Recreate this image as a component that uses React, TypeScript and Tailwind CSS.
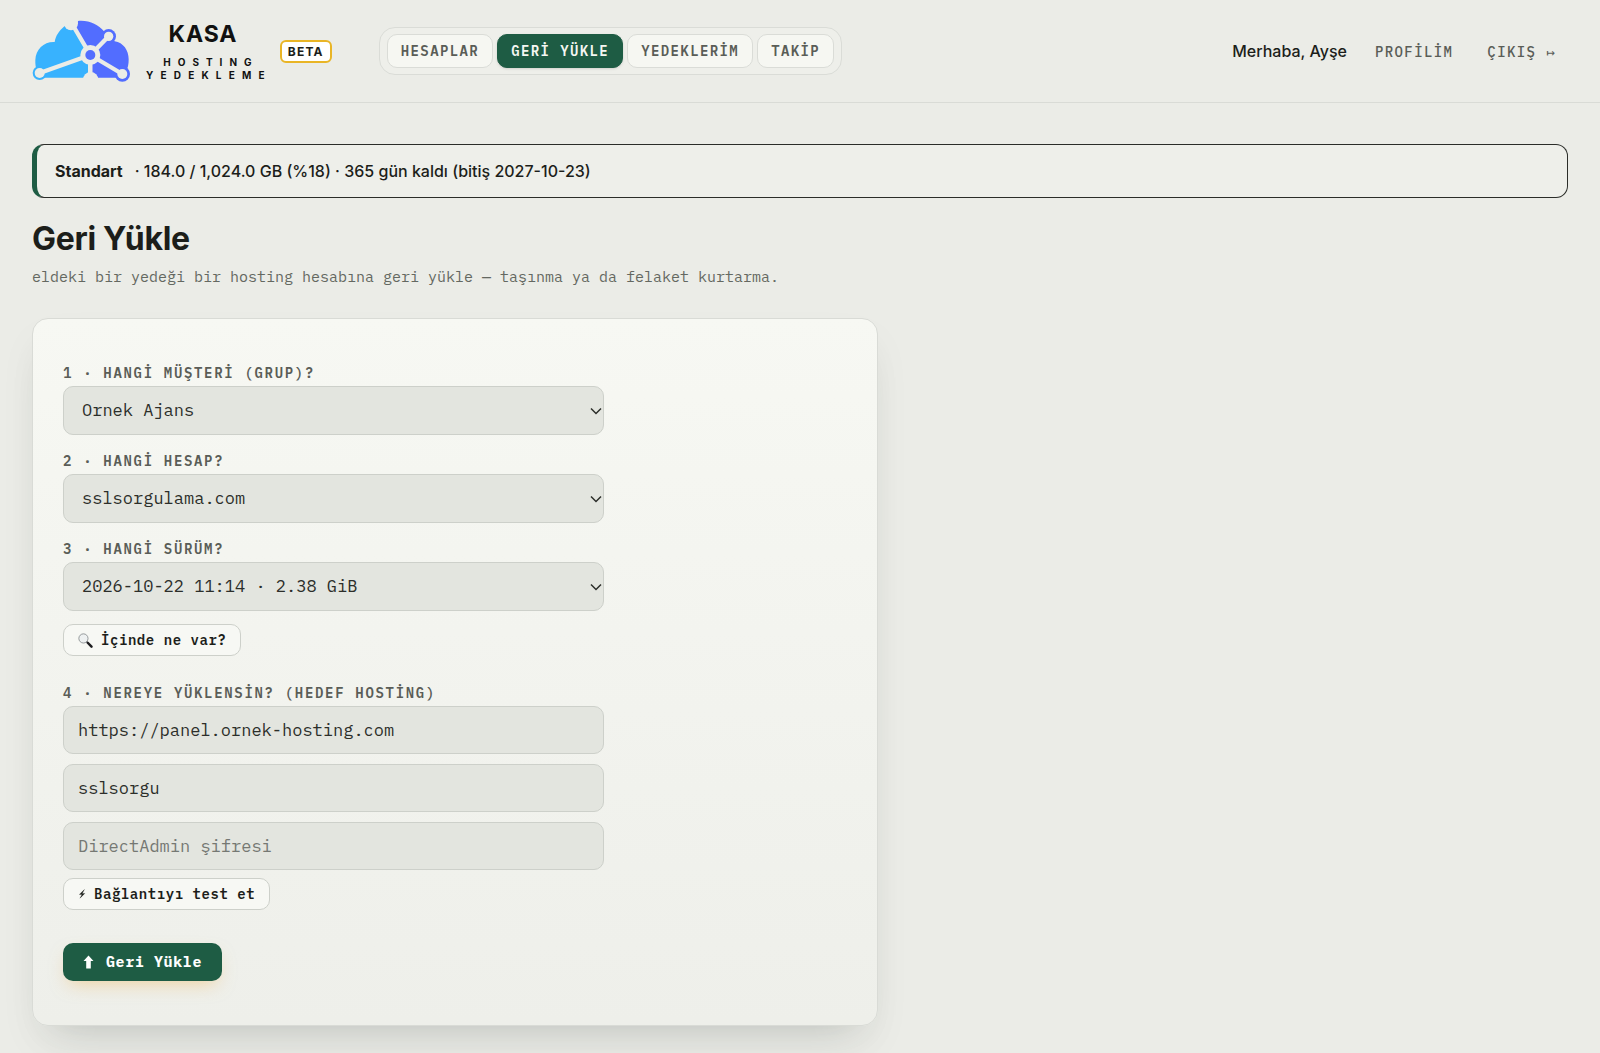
import type { ReactNode } from "react";

const MONO = "font-['IBM_Plex_Mono','Liberation_Mono',monospace]";

function Logo() {
  return (
    <svg viewBox="97 58 292 186" className="h-[62px] w-[98px] shrink-0" aria-hidden="true">
      <path
        d="M130 231C112 222 105 203 106 178C107 145 133 122 164 124C167 106 176 91 194 76L222 80L240 112L264 163V231Z"
        fill="#38b2fe"
      />
      <path
        d="M234 61C268 58 294 72 312 92L344 122C370 126 386 149 386 176C386 190 384 202 378 212L352 231H271V163L226 84Z"
        fill="#526dff"
      />
      <circle cx="213" cy="68" r="21" fill="#ebece7" />
      <circle cx="272" cy="237" r="23" fill="#ebece7" />
      <path d="M220 76L271 163V226" fill="none" stroke="#ebece7" strokeWidth="13" />
      <circle cx="119" cy="217" r="21" fill="#38b2fe" />
      <circle cx="367" cy="220" r="23" fill="#526dff" />
      <circle cx="326" cy="107" r="22" fill="#526dff" />
      <path d="M119 217L271 163M271 163L367 220M271 163L326 107" stroke="#ebece7" strokeWidth="13" />
      <circle cx="119" cy="217" r="15" fill="#ebece7" />
      <circle cx="367" cy="220" r="15" fill="#ebece7" />
      <circle cx="326" cy="107" r="14" fill="#ebece7" />
      <circle cx="271" cy="163" r="30" fill="#ebece7" />
      <circle cx="271" cy="163" r="15" fill="#526dff" />
    </svg>
  );
}

function SearchIcon() {
  return (
    <svg viewBox="0 0 16 16" className="h-[15px] w-[15px]" aria-hidden="true">
      <circle cx="5.8" cy="5.8" r="4.9" fill="#eef1f1" stroke="#85898c" strokeWidth="0.9" />
      <path d="M9.2 9.2L11 11" stroke="#70767a" strokeWidth="1.2" />
      <path d="M10.4 10.4L14.4 14.6" stroke="#1d1d1f" strokeWidth="2.6" strokeLinecap="round" />
    </svg>
  );
}

function BoltIcon() {
  return (
    <svg viewBox="0 0 8 12" className="h-3 w-2" aria-hidden="true">
      <path d="M6.4 1.6L1.4 6.4H4L2 10.2L6.8 5.4H4.2Z" fill="#1c1e1a" stroke="#1c1e1a" strokeWidth="0.3" strokeLinejoin="round" />
    </svg>
  );
}

function UpIcon() {
  return (
    <svg viewBox="0 0 11 14" className="h-3.5 w-[11px]" aria-hidden="true">
      <path d="M5.5 0.5L10.5 6H7.8V13.5H3.2V6H0.5Z" fill="#fff" />
    </svg>
  );
}

const tabs = ["HESAPLAR", "GERİ YÜKLE", "YEDEKLERİM", "TAKİP"];

function Header() {
  return (
    <header className="flex items-center border-b border-[#d9dbd6] px-8 pt-5 pb-5">
      <a href="#" className="flex items-center">
        <Logo />
        <span className="ml-4 flex flex-col items-center text-[#111]">
          <span className="mr-3 text-[23px] leading-7 font-bold tracking-[0.04em]">KASA</span>
          <span className="mt-2 pl-1 text-[10px] leading-[13px] font-bold tracking-[0.7em]">HOSTING</span>
          <span className="text-[10px] leading-[13px] font-bold tracking-[0.72em]">YEDEKLEME</span>
        </span>
      </a>
      <span className="ml-2 rounded-md border-2 border-[#e9b526] bg-white px-[6px] text-[12px] leading-[19px] font-bold tracking-[0.1em] text-[#1c1e1a]">
        BETA
      </span>
      <nav className="ml-[47px] flex gap-1 rounded-2xl border border-[#dadcd7] bg-[#eeefea] px-[7px] py-[6px]">
        {tabs.map((t) => (
          <a
            key={t}
            href="#"
            className={`${MONO} rounded-[10px] border px-[13px] py-[6px] text-[14px] leading-5 font-semibold tracking-[0.1em] whitespace-nowrap ${
              t === "GERİ YÜKLE"
                ? "border-[#1e5c44] bg-[#1e5c44] text-[#f5f7f2] shadow-sm"
                : "border-[#dadcd7] bg-[#f6f7f2] text-[#5a5d57]"
            }`}
          >
            {t}
          </a>
        ))}
      </nav>
      <div className="ml-auto flex items-center gap-[10px]">
        <span className="mr-[6px] text-[16px] leading-6 font-medium whitespace-nowrap">Merhaba, Ayşe</span>
        <a href="#" className={`${MONO} px-3 pt-[2px] text-[14px] leading-6 font-medium tracking-[0.1em] text-[#5a5d57]`}>
          PROFİLİM
        </a>
        <a
          href="#"
          className={`${MONO} px-3 pt-[2px] text-[14px] leading-6 font-medium tracking-[0.1em] whitespace-nowrap text-[#5a5d57]`}
        >
          ÇIKIŞ ↦
        </a>
      </div>
    </header>
  );
}

function FieldLabel({ id, children }: { id: string; children: ReactNode }) {
  return (
    <label
      htmlFor={id}
      className={`${MONO} mb-[2px] block text-[14px] leading-[22px] font-semibold tracking-[0.12em] text-[#5a5d57]`}
    >
      {children}
    </label>
  );
}

const FIELD = "block w-full rounded-[10px] border border-[#cdd0ca] bg-[#e3e5df] text-[17px] text-[#2c2e2a]";

function SelectField({ id, label, value }: { id: string; label: string; value: string }) {
  return (
    <div>
      <FieldLabel id={id}>{label}</FieldLabel>
      <div className="relative">
        <select id={id} className={`${MONO} ${FIELD} h-[49px] appearance-none pr-6 pl-[18px]`}>
          <option>{value}</option>
        </select>
        <svg
          viewBox="0 0 12 8"
          className="pointer-events-none absolute top-1/2 right-[2px] h-2 w-3 -translate-y-1/2"
          fill="none"
          stroke="#2c2e2a"
          strokeWidth="1.5"
          aria-hidden="true"
        >
          <path d="M1 1.5L6 6.5L11 1.5" />
        </svg>
      </div>
    </div>
  );
}

function SmallButton({ children }: { children: ReactNode }) {
  return (
    <button
      type="button"
      className={`${MONO} flex w-fit items-center gap-2 rounded-[10px] border border-[#cdd0ca] bg-[#f7f8f4] px-[14px] py-1 text-[14px] leading-[22px] font-semibold tracking-[0.04em]`}
    >
      {children}
    </button>
  );
}

export default function App() {
  return (
    <div className="min-h-screen bg-[#ebece7] font-['Inter',sans-serif] text-[#1c1e1a]">
      <Header />
      <main className="px-8 pt-[41px] pb-7">
        <div className="rounded-xl border border-l-[5px] border-[#2b2d29] border-l-[#1e5c44] bg-[#eeefea] px-[18px] py-[14px] text-[16px] leading-6 font-medium">
          <strong className="mr-3 font-bold">Standart</strong>· 184.0 / 1,024.0 GB (%18) · 365 gün kaldı (bitiş 2027-10-23)
        </div>
        <h1 className="mt-[21px] text-[32px] leading-10 font-bold tracking-[-0.01em]">Geri Yükle</h1>
        <p className={`${MONO} mt-[6px] text-[15px] leading-6 text-[#646861]`}>
          eldeki bir yedeği bir hosting hesabına geri yükle — taşınma ya da felaket kurtarma.
        </p>
        <form
          className="mt-[29px] max-w-[846px] rounded-2xl border border-[#d9dbd6] bg-linear-to-b from-[#f7f8f3] to-[#eeefea] px-[30px] pt-[43px] pb-[44px] shadow-[0_24px_40px_-24px_rgba(40,55,48,0.22),0_20px_40px_rgba(40,55,48,0.04)]"
          onSubmit={(e) => e.preventDefault()}
        >
          <div className="max-w-[541px]">
            <div className="flex flex-col gap-[15px]">
              <SelectField id="group" label="1 · HANGİ MÜŞTERİ (GRUP)?" value="Ornek Ajans" />
              <SelectField id="account" label="2 · HANGİ HESAP?" value="sslsorgulama.com" />
              <SelectField id="version" label="3 · HANGİ SÜRÜM?" value="2026-10-22 11:14 · 2.38 GiB" />
            </div>
            <div className="mt-[13px]">
              <SmallButton>
                <SearchIcon />
                İçinde ne var?
              </SmallButton>
            </div>
            <div className="mt-[26px]">
              <FieldLabel id="host">4 · NEREYE YÜKLENSİN? (HEDEF HOSTİNG)</FieldLabel>
              <div className="flex flex-col gap-[10px]">
                <input
                  id="host"
                  type="text"
                  defaultValue="https://panel.ornek-hosting.com"
                  className={`${MONO} ${FIELD} h-12 px-[14px]`}
                />
                <input type="text" aria-label="Kullanıcı" defaultValue="sslsorgu" className={`${MONO} ${FIELD} h-12 px-[14px]`} />
                <input
                  type="password"
                  aria-label="DirectAdmin şifresi"
                  placeholder="DirectAdmin şifresi"
                  className={`${MONO} ${FIELD} h-12 px-[14px] placeholder:text-[#757873]`}
                />
              </div>
            </div>
            <div className="mt-2">
              <SmallButton>
                <BoltIcon />
                Bağlantıyı test et
              </SmallButton>
            </div>
            <button
              type="submit"
              className={`${MONO} mt-[33px] flex items-center gap-3 rounded-[10px] bg-[#1e5c44] px-5 py-[7px] text-[15px] leading-6 font-bold tracking-[0.04em] text-white shadow-[0_8px_18px_-6px_rgba(240,180,80,0.5)]`}
            >
              <UpIcon />
              Geri Yükle
            </button>
          </div>
        </form>
      </main>
    </div>
  );
}
